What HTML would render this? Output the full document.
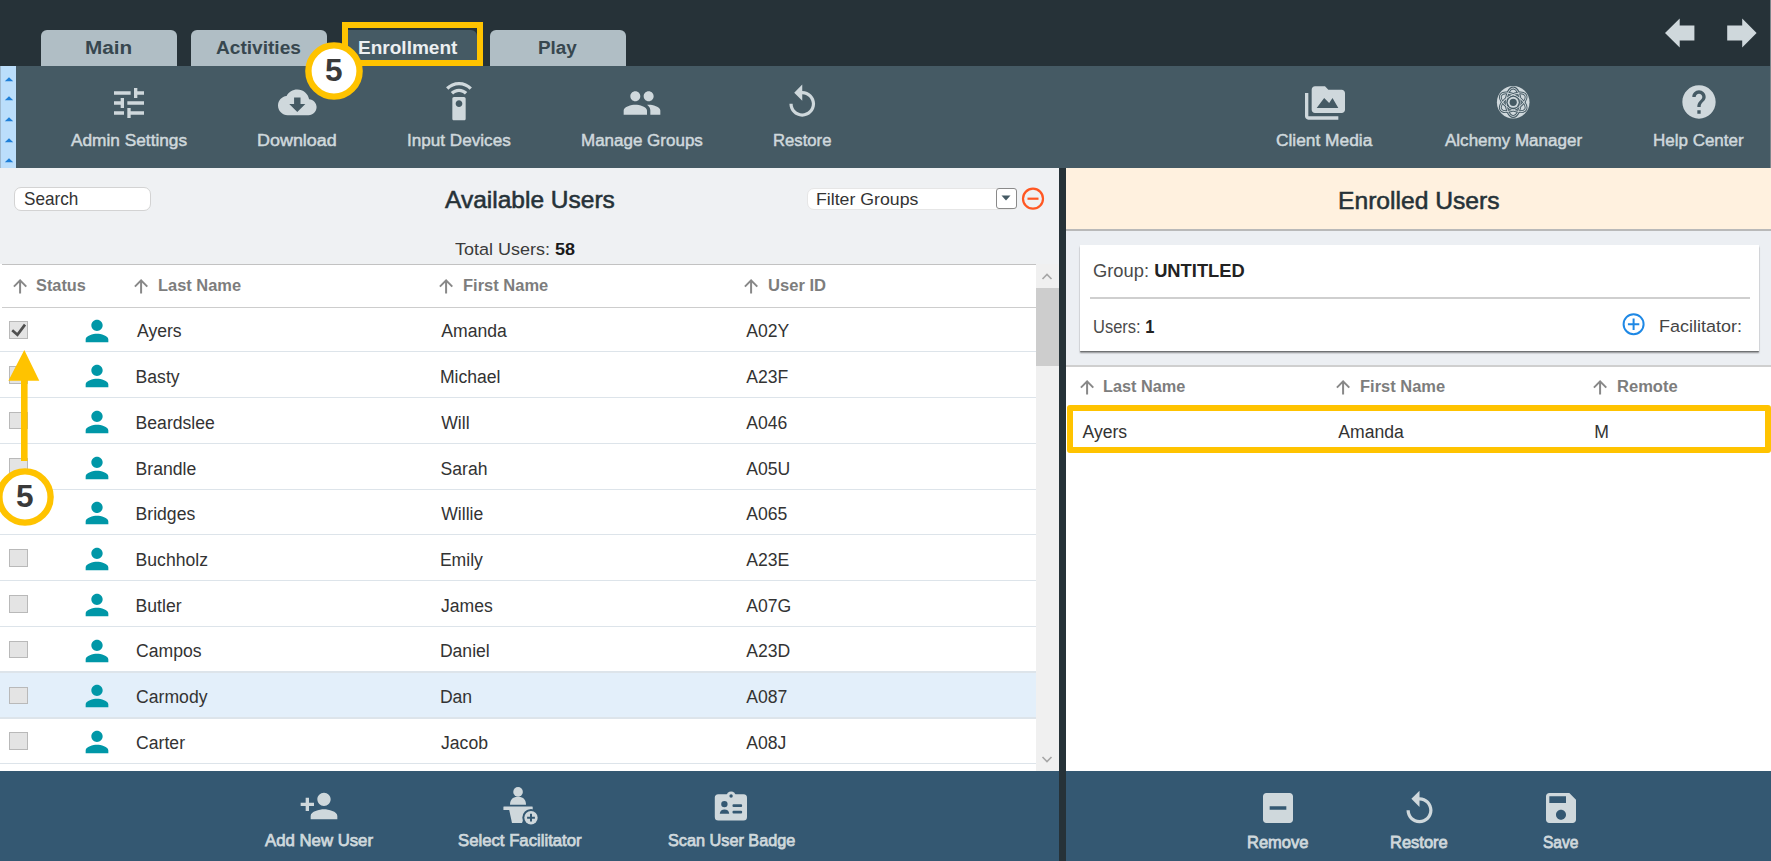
<!DOCTYPE html>
<html><head><meta charset="utf-8"><style>
html,body{margin:0;padding:0;}
body{width:1771px;height:861px;position:relative;overflow:hidden;background:#263238;font-family:"Liberation Sans", sans-serif;}
.r{position:absolute;}
.t{position:absolute;line-height:1;white-space:nowrap;transform-origin:0 0;}
</style></head><body>

<div class="r" style="left:1770px;top:0px;width:1px;height:168px;background:#7d868b;"></div>
<div class="r" style="left:41px;top:30px;width:136px;height:36px;background:#B0BEC5;border-radius:6px 6px 0 0;"></div>
<div class="t" style="left:85.05px;top:39.46px;font-size:18.76px;color:#37474F;transform:scaleX(1.1058);"><span style="font-weight:700">Main</span></div>
<div class="r" style="left:190.5px;top:30px;width:136px;height:36px;background:#B0BEC5;border-radius:6px 6px 0 0;"></div>
<div class="t" style="left:216.02px;top:39.46px;font-size:18.76px;color:#37474F;transform:scaleX(1.0187);"><span style="font-weight:700">Activities</span></div>
<div class="r" style="left:342px;top:30px;width:135px;height:36px;background:#455A64;border-radius:6px 6px 0 0;"></div>
<div class="t" style="left:358.26px;top:39.46px;font-size:18.76px;color:#ECEFF1;transform:scaleX(1.0154);"><span style="font-weight:700">Enrollment</span></div>
<div class="r" style="left:489.5px;top:30px;width:136px;height:36px;background:#B0BEC5;border-radius:6px 6px 0 0;"></div>
<div class="t" style="left:538.27px;top:39.46px;font-size:18.76px;color:#37474F;transform:scaleX(1.0071);"><span style="font-weight:700">Play</span></div>
<svg class="r" style="left:1660px;top:14px;" width="100" height="40" viewBox="0 0 100 40"><path fill="#CFD8DC" d="M5 19 L19.7 4.5 V11.4 H34.4 V26.4 H19.7 V33.6 Z"/><path fill="#CFD8DC" d="M96.6 19 L82.2 4.5 V11.4 H67.2 V26.4 H82.2 V33.6 Z"/></svg>
<div class="r" style="left:0px;top:65.5px;width:1770px;height:102.5px;background:#455A64;"></div>
<div class="r" style="left:0px;top:65.5px;width:16px;height:102.5px;background:#BBDEFB;"></div>
<div class="r" style="left:0px;top:65.5px;width:1px;height:102.5px;background:#9fb9cf;"></div>
<svg class="r" style="left:3.5px;top:76.4px;" width="10" height="6" viewBox="0 0 10 6"><path fill="#1E7FD8" d="M0.8 5.3 L5 1.2 L9.2 5.3 Z"/></svg>
<svg class="r" style="left:3.5px;top:95.3px;" width="10" height="6" viewBox="0 0 10 6"><path fill="#1E7FD8" d="M0.8 5.3 L5 1.2 L9.2 5.3 Z"/></svg>
<svg class="r" style="left:3.5px;top:116px;" width="10" height="6" viewBox="0 0 10 6"><path fill="#1E7FD8" d="M0.8 5.3 L5 1.2 L9.2 5.3 Z"/></svg>
<svg class="r" style="left:3.5px;top:136.6px;" width="10" height="6" viewBox="0 0 10 6"><path fill="#1E7FD8" d="M0.8 5.3 L5 1.2 L9.2 5.3 Z"/></svg>
<svg class="r" style="left:3.5px;top:157.3px;" width="10" height="6" viewBox="0 0 10 6"><path fill="#1E7FD8" d="M0.8 5.3 L5 1.2 L9.2 5.3 Z"/></svg>
<svg class="r" style="left:109.0px;top:82.5px;" width="40" height="40" viewBox="0 0 24 24"><path fill="#CFD8DC" d="M3 17v2h6v-2H3zM3 5v2h10V5H3zm10 16v-2h8v-2h-8v-2h-2v6h2zM7 9v2H3v2h4v2h2V9H7zm14 4v-2H11v2h10zm-6-4h2V7h4V5h-4V3h-2v6z"/></svg>
<svg class="r" style="left:278.0px;top:82.8px;" width="38.6" height="38.6" viewBox="0 0 24 24"><path fill="#CFD8DC" d="M19.35 10.04C18.67 6.59 15.64 4 12 4 9.11 4 6.6 5.64 5.35 8.04 2.34 8.36 0 10.91 0 14c0 3.31 2.69 6 6 6h13c2.76 0 5-2.24 5-5 0-2.64-2.05-4.78-4.650-4.96zM17 13l-5 5-5-5h3V9h4v4h3z"/></svg>
<svg class="r" style="left:439.0px;top:82.2px;" width="40" height="40" viewBox="0 0 24 24"><path fill="#CFD8DC" d="M15 9H9c-.55 0-1 .45-1 1v12c0 .55.45 1 1 1h6c.55 0 1-.45 1-1V10c0-.55-.45-1-1-1zm-3 6c-1.1 0-2-.9-2-2s.9-2 2-2 2 .9 2 2-.9 2-2 2zM7.05 6.05l1.41 1.41C9.37 6.56 10.62 6 12 6s2.63.56 3.54 1.46l1.41-1.41C15.68 4.78 13.93 4 12 4s-3.68.78-4.95 2.05zM12 0C8.96 0 6.21 1.23 4.22 3.22l1.41 1.41C7.26 3.01 9.51 2 12 2s4.74 1.01 6.36 2.64l1.41-1.41C17.79 1.23 15.04 0 12 0z"/></svg>
<svg class="r" style="left:622.3px;top:83.2px;" width="40" height="40" viewBox="0 0 24 24"><path fill="#CFD8DC" d="M16 11c1.66 0 2.99-1.34 2.99-3S17.66 5 16 5c-1.66 0-3 1.34-3 3s1.34 3 3 3zm-8 0c1.66 0 2.99-1.34 2.99-3S9.66 5 8 5C6.34 5 5 6.34 5 8s1.34 3 3 3zm0 2c-2.33 0-7 1.17-7 3.5V19h14v-2.5c0-2.33-4.67-3.5-7-3.5zm8 0c-.29 0-.62.02-.97.05 1.16.84 1.97 1.97 1.97 3.45V19h6v-2.5c0-2.33-4.67-3.5-7-3.5z"/></svg>
<svg class="r" style="left:783.05px;top:83.3px;" width="38.5" height="38.5" viewBox="0 0 24 24"><path fill="#CFD8DC" d="M12 5V1L7 6l5 5V7c3.31 0 6 2.69 6 6s-2.69 6-6 6-6-2.69-6-6H4c0 4.42 3.58 8 8 8s8-3.58 8-8-3.58-8-8-8z"/></svg>
<svg class="r" style="left:1305.0px;top:82.7px;" width="40" height="40" viewBox="0 0 24 24"><path fill="#CFD8DC" d="M2 6H0v5h.01L0 20c0 1.1.9 2 2 2h18v-2H2V6zm20-2h-8l-2-2H6c-1.1 0-1.99.9-1.99 2L4 16c0 1.1.9 2 2 2h16c1.1 0 2-.9 2-2V6c0-1.1-.9-2-2-2zM7 15l4.5-6 3 3.01L16.5 9l3.5 6H7z"/></svg>
<svg class="r" style="left:1493px;top:82px;" width="40" height="40" viewBox="0 0 40 40"><circle cx="20.2" cy="20.3" r="16.3" fill="#CFD8DC"/>
<g fill="none" stroke="#455A64" stroke-width="2.8">
<ellipse cx="20.2" cy="20.3" rx="14.3" ry="7" transform="rotate(90 20.2 20.3)"/>
<ellipse cx="20.2" cy="20.3" rx="14.3" ry="7" transform="rotate(30 20.2 20.3)"/>
<ellipse cx="20.2" cy="20.3" rx="14.3" ry="7" transform="rotate(150 20.2 20.3)"/></g>
<g fill="none" stroke="#CFD8DC" stroke-width="0.9">
<ellipse cx="20.2" cy="20.3" rx="14.3" ry="7" transform="rotate(90 20.2 20.3)"/>
<ellipse cx="20.2" cy="20.3" rx="14.3" ry="7" transform="rotate(30 20.2 20.3)"/>
<ellipse cx="20.2" cy="20.3" rx="14.3" ry="7" transform="rotate(150 20.2 20.3)"/></g>
<circle cx="20.2" cy="20.3" r="6.6" fill="#455A64"/>
<circle cx="20.2" cy="20.3" r="5.5" fill="#CFD8DC"/>
<circle cx="20.2" cy="20.3" r="3.6" fill="#455A64"/></svg>
<svg class="r" style="left:1678.6px;top:82.3px;" width="40" height="40" viewBox="0 0 24 24"><path fill="#CFD8DC" d="M12 2C6.48 2 2 6.48 2 12s4.48 10 10 10 10-4.48 10-10S17.52 2 12 2zm1 17h-2v-2h2v2zm2.07-7.75l-.9.92C13.45 12.9 13 13.5 13 15h-2v-.5c0-1.1.45-2.1 1.17-2.83l1.24-1.26c.37-.36.59-.86.59-1.41 0-1.1-.9-2-2-2s-2 .9-2 2H8c0-2.21 1.79-4 4-4s4 1.79 4 4c0 .88-.36 1.68-.93 2.25z"/></svg>
<div class="t" style="left:71.30px;top:132.19px;font-size:17.30px;color:#CFD8DC;transform:scaleX(0.9988);"><span style="font-weight:400;-webkit-text-stroke:0.5px #CFD8DC">Admin Settings</span></div>
<div class="t" style="left:257.36px;top:132.19px;font-size:17.30px;color:#CFD8DC;transform:scaleX(1.0378);"><span style="font-weight:400;-webkit-text-stroke:0.5px #CFD8DC">Download</span></div>
<div class="t" style="left:406.56px;top:132.19px;font-size:17.30px;color:#CFD8DC;transform:scaleX(0.9905);"><span style="font-weight:400;-webkit-text-stroke:0.5px #CFD8DC">Input Devices</span></div>
<div class="t" style="left:581.04px;top:132.19px;font-size:17.30px;color:#CFD8DC;transform:scaleX(0.9832);"><span style="font-weight:400;-webkit-text-stroke:0.5px #CFD8DC">Manage Groups</span></div>
<div class="t" style="left:773.46px;top:132.19px;font-size:17.30px;color:#CFD8DC;transform:scaleX(0.9660);"><span style="font-weight:400;-webkit-text-stroke:0.5px #CFD8DC">Restore</span></div>
<div class="t" style="left:1276.03px;top:132.19px;font-size:17.30px;color:#CFD8DC;transform:scaleX(1.0028);"><span style="font-weight:400;-webkit-text-stroke:0.5px #CFD8DC">Client Media</span></div>
<div class="t" style="left:1444.90px;top:132.19px;font-size:17.30px;color:#CFD8DC;transform:scaleX(0.9842);"><span style="font-weight:400;-webkit-text-stroke:0.5px #CFD8DC">Alchemy Manager</span></div>
<div class="t" style="left:1652.74px;top:132.19px;font-size:17.30px;color:#CFD8DC;transform:scaleX(0.9829);"><span style="font-weight:400;-webkit-text-stroke:0.5px #CFD8DC">Help Center</span></div>
<div class="r" style="left:0px;top:168px;width:1059px;height:603px;background:#EFF1F3;"></div>
<div class="r" style="left:14px;top:187px;width:137px;height:23.5px;background:#fff;border:1px solid #d3d3d3;border-radius:7px;box-sizing:border-box;"></div>
<div class="t" style="left:23.63px;top:190.78px;font-size:17.79px;color:#333333;transform:scaleX(0.9640);"><span style="font-weight:400">Search</span></div>
<div class="t" style="left:444.60px;top:188.02px;font-size:23.86px;color:#263238;transform:scaleX(1.0272);-webkit-text-stroke:0.55px #263238;"><span style="font-weight:400">Available Users</span></div>
<div class="r" style="left:807px;top:188px;width:210px;height:22px;background:#fff;border:1px solid #e6e6e6;border-radius:7px;box-sizing:border-box;"></div>
<div class="t" style="left:815.98px;top:191.50px;font-size:16.83px;color:#333333;transform:scaleX(1.0522);"><span style="font-weight:400">Filter Groups</span></div>
<div class="r" style="left:995.5px;top:188px;width:21px;height:21px;background:#fff;border:1px solid #8a8a8a;border-radius:3px;box-sizing:border-box;"></div>
<svg class="r" style="left:1001px;top:195px;" width="10" height="6" viewBox="0 0 10 6"><path fill="#455A64" d="M0.5 0.5 H9.5 L5 5.5Z"/></svg>
<svg class="r" style="left:1021px;top:187px;" width="24" height="24" viewBox="0 0 24 24"><circle cx="12" cy="11.7" r="10" fill="none" stroke="#FF5722" stroke-width="2.2"/><rect x="6.5" y="10.6" width="11" height="2.2" fill="#FF5722"/></svg>
<div class="t" style="left:455.04px;top:241.36px;font-size:17.10px;color:#3a3a3a;transform:scaleX(1.0519);"><span style="font-weight:400">Total Users: </span><span style="font-weight:700;color:#1a1a1a">58</span></div>
<div class="r" style="left:0px;top:264px;width:1036px;height:507px;background:#fff;"></div>
<div class="r" style="left:2px;top:263.5px;width:1034px;height:1.5px;background:#c2c2c2;"></div>
<div class="r" style="left:2px;top:306.7px;width:1034px;height:1.5px;background:#cdcdcd;"></div>
<div class="r" style="left:1036px;top:264px;width:23px;height:507px;background:#F0F0F0;"></div>
<div class="r" style="left:1036px;top:288px;width:23px;height:78px;background:#CDCDCD;"></div>
<svg class="r" style="left:1041px;top:271px;" width="12" height="10" viewBox="0 0 12 10"><path fill="none" stroke="#a6a6a6" stroke-width="1.6" d="M1.5 8 L6 3.5 L10.5 8"/></svg>
<svg class="r" style="left:1041px;top:755px;" width="12" height="10" viewBox="0 0 12 10"><path fill="none" stroke="#a6a6a6" stroke-width="1.6" d="M1.5 2 L6 6.5 L10.5 2"/></svg>
<svg class="r" style="left:12.9px;top:279px;" width="14.2" height="14.5" viewBox="0 0 14.2 14.5"><path fill="none" stroke="#888" stroke-width="2" stroke-linecap="butt" d="M7.1 14.5 V1.2 M0.9 7.6 L7.1 1.4 L13.3 7.6"/></svg>
<div class="t" style="left:36.01px;top:278.12px;font-size:16.80px;color:#7d7d7d;transform:scaleX(0.9731);"><span style="font-weight:700">Status</span></div>
<svg class="r" style="left:134.4px;top:279px;" width="14.2" height="14.5" viewBox="0 0 14.2 14.5"><path fill="none" stroke="#888" stroke-width="2" stroke-linecap="butt" d="M7.1 14.5 V1.2 M0.9 7.6 L7.1 1.4 L13.3 7.6"/></svg>
<div class="t" style="left:158.23px;top:278.12px;font-size:16.80px;color:#7d7d7d;transform:scaleX(0.9790);"><span style="font-weight:700">Last Name</span></div>
<svg class="r" style="left:439px;top:279px;" width="14.2" height="14.5" viewBox="0 0 14.2 14.5"><path fill="none" stroke="#888" stroke-width="2" stroke-linecap="butt" d="M7.1 14.5 V1.2 M0.9 7.6 L7.1 1.4 L13.3 7.6"/></svg>
<div class="t" style="left:463.03px;top:278.12px;font-size:16.80px;color:#7d7d7d;transform:scaleX(0.9825);"><span style="font-weight:700">First Name</span></div>
<svg class="r" style="left:743.8px;top:279px;" width="14.2" height="14.5" viewBox="0 0 14.2 14.5"><path fill="none" stroke="#888" stroke-width="2" stroke-linecap="butt" d="M7.1 14.5 V1.2 M0.9 7.6 L7.1 1.4 L13.3 7.6"/></svg>
<div class="t" style="left:767.60px;top:278.12px;font-size:16.80px;color:#7d7d7d;transform:scaleX(0.9874);"><span style="font-weight:700">User ID</span></div>
<div class="r" style="left:0px;top:350.9px;width:1036px;height:1.5px;background:#dde4ea;"></div>
<div class="r" style="left:9px;top:321.25px;width:19px;height:17.6px;background:#e4e4e4;border:1px solid #b9b9b9;box-sizing:border-box;"></div>
<svg class="r" style="left:9px;top:321.25px;" width="19" height="18" viewBox="0 0 19 18"><path fill="none" stroke="#505050" stroke-width="2.7" d="M3.2 9.3 L8.4 13.8 L16 3.6"/></svg>
<svg class="r" style="left:79.8px;top:313.95px;" width="34" height="34" viewBox="0 0 24 24"><path fill="#0097A7" d="M12 12c2.21 0 4-1.79 4-4s-1.79-4-4-4-4 1.79-4 4 1.79 4 4 4zm0 2c-2.67 0-8 1.34-8 4v2h16v-2c0-2.66-5.33-4-8-4z"/></svg>
<div class="t" style="left:137.00px;top:323.04px;font-size:17.60px;color:#333333;transform:scaleX(1.0000);"><span style="font-weight:400">Ayers</span></div>
<div class="t" style="left:441.30px;top:323.04px;font-size:17.60px;color:#333333;transform:scaleX(1.0000);"><span style="font-weight:400">Amanda</span></div>
<div class="t" style="left:746.30px;top:323.04px;font-size:17.60px;color:#333333;transform:scaleX(1.0000);"><span style="font-weight:400">A02Y</span></div>
<div class="r" style="left:0px;top:396.6px;width:1036px;height:1.5px;background:#dde4ea;"></div>
<div class="r" style="left:9px;top:366.05px;width:19px;height:17.6px;background:#e4e4e4;border:1px solid #b9b9b9;box-sizing:border-box;"></div>
<svg class="r" style="left:79.8px;top:358.75px;" width="34" height="34" viewBox="0 0 24 24"><path fill="#0097A7" d="M12 12c2.21 0 4-1.79 4-4s-1.79-4-4-4-4 1.79-4 4 1.79 4 4 4zm0 2c-2.67 0-8 1.34-8 4v2h16v-2c0-2.66-5.33-4-8-4z"/></svg>
<div class="t" style="left:135.59px;top:368.74px;font-size:17.60px;color:#333333;transform:scaleX(1.0000);"><span style="font-weight:400">Basty</span></div>
<div class="t" style="left:439.89px;top:368.74px;font-size:17.60px;color:#333333;transform:scaleX(1.0000);"><span style="font-weight:400">Michael</span></div>
<div class="t" style="left:746.30px;top:368.74px;font-size:17.60px;color:#333333;transform:scaleX(1.0000);"><span style="font-weight:400">A23F</span></div>
<div class="r" style="left:0px;top:442.6px;width:1036px;height:1.5px;background:#dde4ea;"></div>
<div class="r" style="left:9px;top:411.90000000000003px;width:19px;height:17.6px;background:#e4e4e4;border:1px solid #b9b9b9;box-sizing:border-box;"></div>
<svg class="r" style="left:79.8px;top:404.6px;" width="34" height="34" viewBox="0 0 24 24"><path fill="#0097A7" d="M12 12c2.21 0 4-1.79 4-4s-1.79-4-4-4-4 1.79-4 4 1.79 4 4 4zm0 2c-2.67 0-8 1.34-8 4v2h16v-2c0-2.66-5.33-4-8-4z"/></svg>
<div class="t" style="left:135.59px;top:414.74px;font-size:17.60px;color:#333333;transform:scaleX(1.0000);"><span style="font-weight:400">Beardslee</span></div>
<div class="t" style="left:441.21px;top:414.74px;font-size:17.60px;color:#333333;transform:scaleX(1.0000);"><span style="font-weight:400">Will</span></div>
<div class="t" style="left:746.30px;top:414.74px;font-size:17.60px;color:#333333;transform:scaleX(1.0000);"><span style="font-weight:400">A046</span></div>
<div class="r" style="left:0px;top:488.6px;width:1036px;height:1.5px;background:#dde4ea;"></div>
<div class="r" style="left:9px;top:457.90000000000003px;width:19px;height:17.6px;background:#e4e4e4;border:1px solid #b9b9b9;box-sizing:border-box;"></div>
<svg class="r" style="left:79.8px;top:450.6px;" width="34" height="34" viewBox="0 0 24 24"><path fill="#0097A7" d="M12 12c2.21 0 4-1.79 4-4s-1.79-4-4-4-4 1.79-4 4 1.79 4 4 4zm0 2c-2.67 0-8 1.34-8 4v2h16v-2c0-2.66-5.33-4-8-4z"/></svg>
<div class="t" style="left:135.59px;top:460.74px;font-size:17.60px;color:#333333;transform:scaleX(1.0000);"><span style="font-weight:400">Brandle</span></div>
<div class="t" style="left:440.51px;top:460.74px;font-size:17.60px;color:#333333;transform:scaleX(1.0000);"><span style="font-weight:400">Sarah</span></div>
<div class="t" style="left:746.30px;top:460.74px;font-size:17.60px;color:#333333;transform:scaleX(1.0000);"><span style="font-weight:400">A05U</span></div>
<div class="r" style="left:0px;top:533.7px;width:1036px;height:1.5px;background:#dde4ea;"></div>
<div class="r" style="left:9px;top:503.4500000000001px;width:19px;height:17.6px;background:#e4e4e4;border:1px solid #b9b9b9;box-sizing:border-box;"></div>
<svg class="r" style="left:79.8px;top:496.1500000000001px;" width="34" height="34" viewBox="0 0 24 24"><path fill="#0097A7" d="M12 12c2.21 0 4-1.79 4-4s-1.79-4-4-4-4 1.79-4 4 1.79 4 4 4zm0 2c-2.67 0-8 1.34-8 4v2h16v-2c0-2.66-5.33-4-8-4z"/></svg>
<div class="t" style="left:135.59px;top:505.84px;font-size:17.60px;color:#333333;transform:scaleX(1.0000);"><span style="font-weight:400">Bridges</span></div>
<div class="t" style="left:441.21px;top:505.84px;font-size:17.60px;color:#333333;transform:scaleX(1.0000);"><span style="font-weight:400">Willie</span></div>
<div class="t" style="left:746.30px;top:505.84px;font-size:17.60px;color:#333333;transform:scaleX(1.0000);"><span style="font-weight:400">A065</span></div>
<div class="r" style="left:0px;top:579.9px;width:1036px;height:1.5px;background:#dde4ea;"></div>
<div class="r" style="left:9px;top:549.0999999999999px;width:19px;height:17.6px;background:#e4e4e4;border:1px solid #b9b9b9;box-sizing:border-box;"></div>
<svg class="r" style="left:79.8px;top:541.8px;" width="34" height="34" viewBox="0 0 24 24"><path fill="#0097A7" d="M12 12c2.21 0 4-1.79 4-4s-1.79-4-4-4-4 1.79-4 4 1.79 4 4 4zm0 2c-2.67 0-8 1.34-8 4v2h16v-2c0-2.66-5.33-4-8-4z"/></svg>
<div class="t" style="left:135.59px;top:552.04px;font-size:17.60px;color:#333333;transform:scaleX(1.0000);"><span style="font-weight:400">Buchholz</span></div>
<div class="t" style="left:439.89px;top:552.04px;font-size:17.60px;color:#333333;transform:scaleX(1.0000);"><span style="font-weight:400">Emily</span></div>
<div class="t" style="left:746.30px;top:552.04px;font-size:17.60px;color:#333333;transform:scaleX(1.0000);"><span style="font-weight:400">A23E</span></div>
<div class="r" style="left:0px;top:625.8px;width:1036px;height:1.5px;background:#dde4ea;"></div>
<div class="r" style="left:9px;top:595.1499999999999px;width:19px;height:17.6px;background:#e4e4e4;border:1px solid #b9b9b9;box-sizing:border-box;"></div>
<svg class="r" style="left:79.8px;top:587.8499999999999px;" width="34" height="34" viewBox="0 0 24 24"><path fill="#0097A7" d="M12 12c2.21 0 4-1.79 4-4s-1.79-4-4-4-4 1.79-4 4 1.79 4 4 4zm0 2c-2.67 0-8 1.34-8 4v2h16v-2c0-2.66-5.33-4-8-4z"/></svg>
<div class="t" style="left:135.59px;top:597.94px;font-size:17.60px;color:#333333;transform:scaleX(1.0000);"><span style="font-weight:400">Butler</span></div>
<div class="t" style="left:441.04px;top:597.94px;font-size:17.60px;color:#333333;transform:scaleX(1.0000);"><span style="font-weight:400">James</span></div>
<div class="t" style="left:746.30px;top:597.94px;font-size:17.60px;color:#333333;transform:scaleX(1.0000);"><span style="font-weight:400">A07G</span></div>
<div class="r" style="left:0px;top:671.3px;width:1036px;height:1.5px;background:#dde4ea;"></div>
<div class="r" style="left:9px;top:640.8499999999999px;width:19px;height:17.6px;background:#e4e4e4;border:1px solid #b9b9b9;box-sizing:border-box;"></div>
<svg class="r" style="left:79.8px;top:633.55px;" width="34" height="34" viewBox="0 0 24 24"><path fill="#0097A7" d="M12 12c2.21 0 4-1.79 4-4s-1.79-4-4-4-4 1.79-4 4 1.79 4 4 4zm0 2c-2.67 0-8 1.34-8 4v2h16v-2c0-2.66-5.33-4-8-4z"/></svg>
<div class="t" style="left:136.12px;top:643.44px;font-size:17.60px;color:#333333;transform:scaleX(1.0000);"><span style="font-weight:400">Campos</span></div>
<div class="t" style="left:439.89px;top:643.44px;font-size:17.60px;color:#333333;transform:scaleX(1.0000);"><span style="font-weight:400">Daniel</span></div>
<div class="t" style="left:746.30px;top:643.44px;font-size:17.60px;color:#333333;transform:scaleX(1.0000);"><span style="font-weight:400">A23D</span></div>
<div class="r" style="left:0px;top:672.8px;width:1036px;height:44.90000000000009px;background:#E3EFFA;"></div>
<div class="r" style="left:0px;top:717.2px;width:1036px;height:1.5px;background:#dde4ea;"></div>
<div class="r" style="left:9px;top:686.55px;width:19px;height:17.6px;background:#e4e4e4;border:1px solid #b9b9b9;box-sizing:border-box;"></div>
<svg class="r" style="left:79.8px;top:679.25px;" width="34" height="34" viewBox="0 0 24 24"><path fill="#0097A7" d="M12 12c2.21 0 4-1.79 4-4s-1.79-4-4-4-4 1.79-4 4 1.79 4 4 4zm0 2c-2.67 0-8 1.34-8 4v2h16v-2c0-2.66-5.33-4-8-4z"/></svg>
<div class="t" style="left:136.12px;top:689.34px;font-size:17.60px;color:#333333;transform:scaleX(1.0000);"><span style="font-weight:400">Carmody</span></div>
<div class="t" style="left:439.89px;top:689.34px;font-size:17.60px;color:#333333;transform:scaleX(1.0000);"><span style="font-weight:400">Dan</span></div>
<div class="t" style="left:746.30px;top:689.34px;font-size:17.60px;color:#333333;transform:scaleX(1.0000);"><span style="font-weight:400">A087</span></div>
<div class="r" style="left:0px;top:762.5px;width:1036px;height:1.5px;background:#dde4ea;"></div>
<div class="r" style="left:9px;top:732.15px;width:19px;height:17.6px;background:#e4e4e4;border:1px solid #b9b9b9;box-sizing:border-box;"></div>
<svg class="r" style="left:79.8px;top:724.85px;" width="34" height="34" viewBox="0 0 24 24"><path fill="#0097A7" d="M12 12c2.21 0 4-1.79 4-4s-1.79-4-4-4-4 1.79-4 4 1.79 4 4 4zm0 2c-2.67 0-8 1.34-8 4v2h16v-2c0-2.66-5.33-4-8-4z"/></svg>
<div class="t" style="left:136.12px;top:734.64px;font-size:17.60px;color:#333333;transform:scaleX(1.0000);"><span style="font-weight:400">Carter</span></div>
<div class="t" style="left:441.04px;top:734.64px;font-size:17.60px;color:#333333;transform:scaleX(1.0000);"><span style="font-weight:400">Jacob</span></div>
<div class="t" style="left:746.30px;top:734.64px;font-size:17.60px;color:#333333;transform:scaleX(1.0000);"><span style="font-weight:400">A08J</span></div>
<div class="r" style="left:1059px;top:168px;width:7px;height:693px;background:#263238;"></div>
<div class="r" style="left:1066px;top:168px;width:705px;height:603px;background:#fff;"></div>
<div class="r" style="left:1066px;top:168px;width:705px;height:61px;background:#FFF1DF;"></div>
<div class="r" style="left:1066px;top:229px;width:705px;height:2px;background:#b9b9b9;"></div>
<div class="r" style="left:1066px;top:231px;width:705px;height:135px;background:#ECEFF3;"></div>
<div class="t" style="left:1338.33px;top:189.01px;font-size:24.69px;color:#263238;transform:scaleX(0.9980);-webkit-text-stroke:0.55px #263238;"><span style="font-weight:400">Enrolled Users</span></div>
<div class="r" style="left:1080px;top:245px;width:679px;height:106px;background:#fff;box-shadow:0 1px 0.5px rgba(0,0,0,0.2), 0 2px 1.5px rgba(0,0,0,0.4), -0.5px 0 0.5px rgba(0,0,0,0.08);"></div>
<div class="r" style="left:1089.5px;top:296.5px;width:660px;height:2px;background:#cfcfcf;"></div>
<div class="t" style="left:1092.98px;top:262.47px;font-size:18.86px;color:#4a4a4a;transform:scaleX(0.9718);"><span style="font-weight:400">Group: </span><span style="font-weight:700;color:#222">UNTITLED</span></div>
<div class="t" style="left:1093.16px;top:316.54px;font-size:19.13px;color:#4a4a4a;transform:scaleX(0.8621);"><span style="font-weight:400">Users: </span><span style="font-weight:700;color:#222">1</span></div>
<svg class="r" style="left:1621px;top:312px;" width="25" height="25" viewBox="0 0 25 25"><circle cx="12.6" cy="12.2" r="10" fill="none" stroke="#1E88E5" stroke-width="2"/><path stroke="#1E88E5" stroke-width="2" d="M12.6 6.5 V17.9 M6.9 12.2 H18.3"/></svg>
<div class="t" style="left:1659.16px;top:317.73px;font-size:17.38px;color:#444;transform:scaleX(1.0355);"><span style="font-weight:400">Facilitator:</span></div>
<div class="r" style="left:1066px;top:365px;width:705px;height:1.5px;background:#cfcfcf;"></div>
<svg class="r" style="left:1079.8px;top:380px;" width="14.2" height="14.5" viewBox="0 0 14.2 14.5"><path fill="none" stroke="#888" stroke-width="2" stroke-linecap="butt" d="M7.1 14.5 V1.2 M0.9 7.6 L7.1 1.4 L13.3 7.6"/></svg>
<div class="t" style="left:1103.34px;top:379.32px;font-size:16.80px;color:#7d7d7d;transform:scaleX(0.9706);"><span style="font-weight:700">Last Name</span></div>
<svg class="r" style="left:1335.5px;top:380px;" width="14.2" height="14.5" viewBox="0 0 14.2 14.5"><path fill="none" stroke="#888" stroke-width="2" stroke-linecap="butt" d="M7.1 14.5 V1.2 M0.9 7.6 L7.1 1.4 L13.3 7.6"/></svg>
<div class="t" style="left:1360.43px;top:379.32px;font-size:16.80px;color:#7d7d7d;transform:scaleX(0.9813);"><span style="font-weight:700">First Name</span></div>
<svg class="r" style="left:1592.5px;top:380px;" width="14.2" height="14.5" viewBox="0 0 14.2 14.5"><path fill="none" stroke="#888" stroke-width="2" stroke-linecap="butt" d="M7.1 14.5 V1.2 M0.9 7.6 L7.1 1.4 L13.3 7.6"/></svg>
<div class="t" style="left:1616.92px;top:379.32px;font-size:16.80px;color:#7d7d7d;transform:scaleX(0.9851);"><span style="font-weight:700">Remote</span></div>
<div class="r" style="left:1067px;top:405px;width:703.5px;height:48px;border:6px solid #FFC300;border-radius:3px;box-sizing:border-box;"></div>
<div class="t" style="left:1082.50px;top:424.44px;font-size:17.60px;color:#333333;transform:scaleX(1.0000);"><span style="font-weight:400">Ayers</span></div>
<div class="t" style="left:1338.30px;top:424.44px;font-size:17.60px;color:#333333;transform:scaleX(1.0000);"><span style="font-weight:400">Amanda</span></div>
<div class="t" style="left:1594.19px;top:424.44px;font-size:17.60px;color:#333333;transform:scaleX(1.0000);"><span style="font-weight:400">M</span></div>
<div class="r" style="left:0px;top:771px;width:1059px;height:90px;background:#345872;"></div>
<div class="r" style="left:1066px;top:771px;width:705px;height:90px;background:#345872;"></div>
<svg class="r" style="left:298.8px;top:786.3px;" width="40" height="40" viewBox="0 0 24 24"><path fill="#CFD8DC" d="M15 12c2.21 0 4-1.79 4-4s-1.79-4-4-4-4 1.79-4 4 1.79 4 4 4zm-9-2V7H4v3H1v2h3v3h2v-3h3v-2H6zm9 4c-2.67 0-8 1.34-8 4v2h16v-2c0-2.66-5.33-4-8-4z"/></svg>
<svg class="r" style="left:498px;top:782px;" width="40" height="44" viewBox="0 0 40 44"><circle cx="20.05" cy="9.9" r="4.8" fill="#CFD8DC"/>
<path fill="#CFD8DC" d="M12 22.7 C12 17 15.5 14.8 20 14.8 C24.5 14.8 28 17 28 22.7 Z"/>
<rect x="5.4" y="24.4" width="29.3" height="3.5" rx="0.5" fill="#CFD8DC"/>
<path fill="#CFD8DC" d="M11.2 27.9 H29 L24 41 H14 Z"/>
<circle cx="33" cy="35.7" r="8.7" fill="#345872"/>
<circle cx="33" cy="35.7" r="6.7" fill="#CFD8DC"/>
<path stroke="#345872" stroke-width="2" d="M33 31.8 V39.6 M29.1 35.7 H36.9"/></svg>
<svg class="r" style="left:708px;top:786px;" width="46" height="40" viewBox="0 0 46 40"><rect x="6.8" y="8.2" width="32.2" height="26.2" rx="3.5" fill="#CFD8DC"/>
<circle cx="23.1" cy="10" r="4.6" fill="#CFD8DC"/>
<circle cx="23.1" cy="10" r="1.7" fill="#345872"/>
<circle cx="16.4" cy="18.1" r="3.2" fill="#345872"/>
<path fill="#345872" d="M11.8 27.7 C11.8 24.8 13.9 23.4 16.5 23.4 C19.1 23.4 21.2 24.8 21.2 27.7 Z"/>
<rect x="24.5" y="18.2" width="9.6" height="2.8" rx="1" fill="#345872"/>
<rect x="24.5" y="24.8" width="9.6" height="2.8" rx="1" fill="#345872"/></svg>
<div class="t" style="left:264.60px;top:833.40px;font-size:16.70px;color:#CFD8DC;transform:scaleX(1.0039);"><span style="font-weight:400;-webkit-text-stroke:0.75px #CFD8DC">Add New User</span></div>
<div class="t" style="left:458.25px;top:833.40px;font-size:16.70px;color:#CFD8DC;transform:scaleX(1.0024);"><span style="font-weight:400;-webkit-text-stroke:0.75px #CFD8DC">Select Facilitator</span></div>
<div class="t" style="left:667.57px;top:833.40px;font-size:16.70px;color:#CFD8DC;transform:scaleX(0.9734);"><span style="font-weight:400;-webkit-text-stroke:0.75px #CFD8DC">Scan User Badge</span></div>
<svg class="r" style="left:1258.2px;top:787.8px;" width="40" height="40" viewBox="0 0 24 24"><path fill="#CFD8DC" d="M19 3H5c-1.1 0-2 .9-2 2v14c0 1.1.9 2 2 2h14c1.1 0 2-.9 2-2V5c0-1.1-.9-2-2-2zm-2 10H7v-2h10v2z"/></svg>
<svg class="r" style="left:1399.9px;top:788.6px;" width="39" height="39" viewBox="0 0 24 24"><path fill="#CFD8DC" d="M12 5V1L7 6l5 5V7c3.31 0 6 2.69 6 6s-2.69 6-6 6-6-2.69-6-6H4c0 4.42 3.58 8 8 8s8-3.58 8-8-3.58-8-8-8z"/></svg>
<svg class="r" style="left:1540.5px;top:787.8px;" width="40" height="40" viewBox="0 0 24 24"><path fill="#CFD8DC" d="M17 3H5c-1.11 0-2 .9-2 2v14c0 1.1.89 2 2 2h14c1.1 0 2-.9 2-2V7l-4-4zm-5 16c-1.66 0-3-1.34-3-3s1.34-3 3-3 3 1.34 3 3-1.34 3-3 3zm3-10H5V5h10v4z"/></svg>
<div class="t" style="left:1247.18px;top:835.13px;font-size:16.90px;color:#CFD8DC;transform:scaleX(0.9763);"><span style="font-weight:400;-webkit-text-stroke:0.8px #CFD8DC">Remove</span></div>
<div class="t" style="left:1390.48px;top:835.13px;font-size:16.90px;color:#CFD8DC;transform:scaleX(0.9766);"><span style="font-weight:400;-webkit-text-stroke:0.8px #CFD8DC">Restore</span></div>
<div class="t" style="left:1542.90px;top:835.13px;font-size:16.90px;color:#CFD8DC;transform:scaleX(0.9186);"><span style="font-weight:400;-webkit-text-stroke:0.8px #CFD8DC">Save</span></div>
<div class="r" style="left:342px;top:22px;width:141px;height:44.4px;border:6.3px solid #FFC300;box-sizing:border-box;"></div>
<svg class="r" style="left:303.6px;top:40.7px;" width="60" height="60" viewBox="0 0 60 60"><circle cx="30" cy="30" r="25.6" fill="#fff" stroke="#FFC300" stroke-width="6.4"/></svg>
<div class="t" style="left:324.75px;top:55.07px;font-size:31.45px;color:#3a3a3a;transform:scaleX(1.0048);"><span style="font-weight:700">5</span></div>
<svg class="r" style="left:0px;top:345px;" width="50" height="120" viewBox="0 0 50 120"><path fill="#FFC300" d="M24.3 4.9 L39.3 35.8 L27.6 35.8 L27.6 116 L21 116 L21 35.8 L8.4 35.8 Z"/></svg>
<svg class="r" style="left:-5.5px;top:466.8px;" width="60" height="60" viewBox="0 0 60 60"><circle cx="30" cy="30" r="25.6" fill="#fff" stroke="#FFC300" stroke-width="6.4"/></svg>
<div class="t" style="left:15.65px;top:481.17px;font-size:31.45px;color:#3a3a3a;transform:scaleX(1.0048);"><span style="font-weight:700">5</span></div>
</body></html>
